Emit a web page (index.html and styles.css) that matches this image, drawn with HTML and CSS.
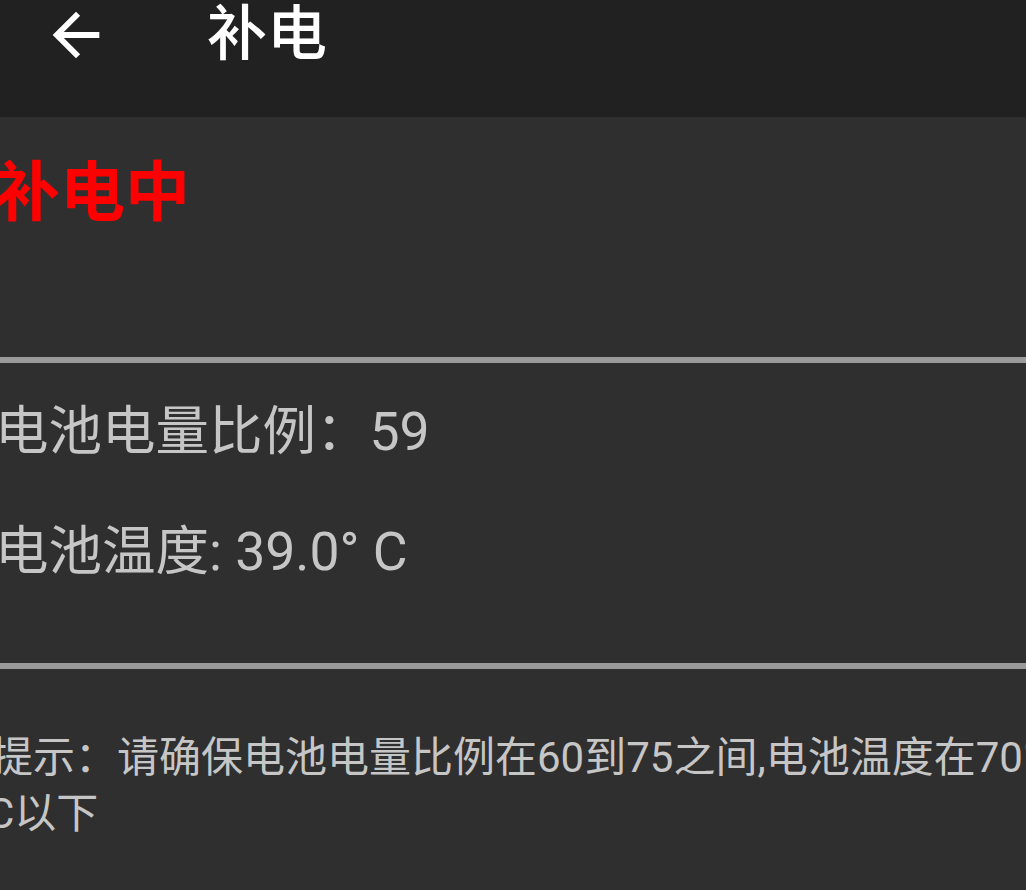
FILE: index.html
```html
<!DOCTYPE html>
<html lang="zh-CN">
<head>
<meta charset="utf-8">
<title>补电</title>
<link rel="stylesheet" href="styles.css">
</head>
<body>
<header class="appbar">
  <div class="toolbar">
    <svg class="back" viewBox="0 0 24 24" width="70" height="70" aria-hidden="true">
      <path d="M20 11H7.83l5.59-5.59L12 4l-8 8 8 8 1.41-1.41L7.83 13H20v-2z" fill="#ffffff"/>
    </svg>
    <h1 class="title">补电</h1>
  </div>
</header>
<main class="content">
  <section class="status">
    <p class="status-text">补电中</p>
  </section>
  <div class="divider"></div>
  <section class="info">
    <p class="info-row">电池电量比例：59</p>
    <p class="info-row">电池温度: 39.0° C</p>
  </section>
  <div class="divider"></div>
  <section class="tip">
    <p class="tip-line">提示：请确保电池电量比例在60到75之间,电池温度在70°</p>
    <p class="tip-line tip-line-2">C以下</p>
  </section>
</main>
</body>
</html>
```

FILE: styles.css
```css
html, body {
  margin: 0;
  padding: 0;
}

body {
  background: #2f2f2f;
  font-family: Roboto, "Noto Sans CJK SC", "Noto Sans", sans-serif;
  color: #c6c6c6;
  width: 1026px;
  height: 890px;
  overflow: hidden;
}

.appbar {
  height: 117px;
  background: #212121;
}

.toolbar {
  height: 70px;
  display: flex;
  align-items: center;
  padding-left: 41px;
}

.back {
  display: block;
  flex: none;
}

.title {
  margin: 0 0 0 96px;
  font-size: 60px;
  font-weight: 500;
  line-height: 70px;
  color: #ffffff;
}

.content {
  margin-left: -5px;
}

.status {
  height: 240px;
  box-sizing: border-box;
  padding-top: 36px;
}

.status-text {
  margin: 0;
  font-size: 65px;
  font-weight: 700;
  line-height: 80px;
  color: #ff0000;
}

.divider {
  height: 6px;
  background: #9a9a9a;
  margin-left: 5px;
}

.info {
  height: 300px;
  box-sizing: border-box;
  padding-top: 39px;
  display: flex;
  flex-direction: column;
  gap: 60px;
}

.info-row {
  margin: 0;
  font-size: 53.5px;
  line-height: 60px;
  white-space: nowrap;
}

.tip {
  padding-top: 61px;
  margin-left: -4px;
}

.tip-line {
  margin: 0;
  font-size: 42px;
  line-height: 56px;
  white-space: nowrap;
}

.tip-line-2 {
  margin-left: -4px;
}
```
